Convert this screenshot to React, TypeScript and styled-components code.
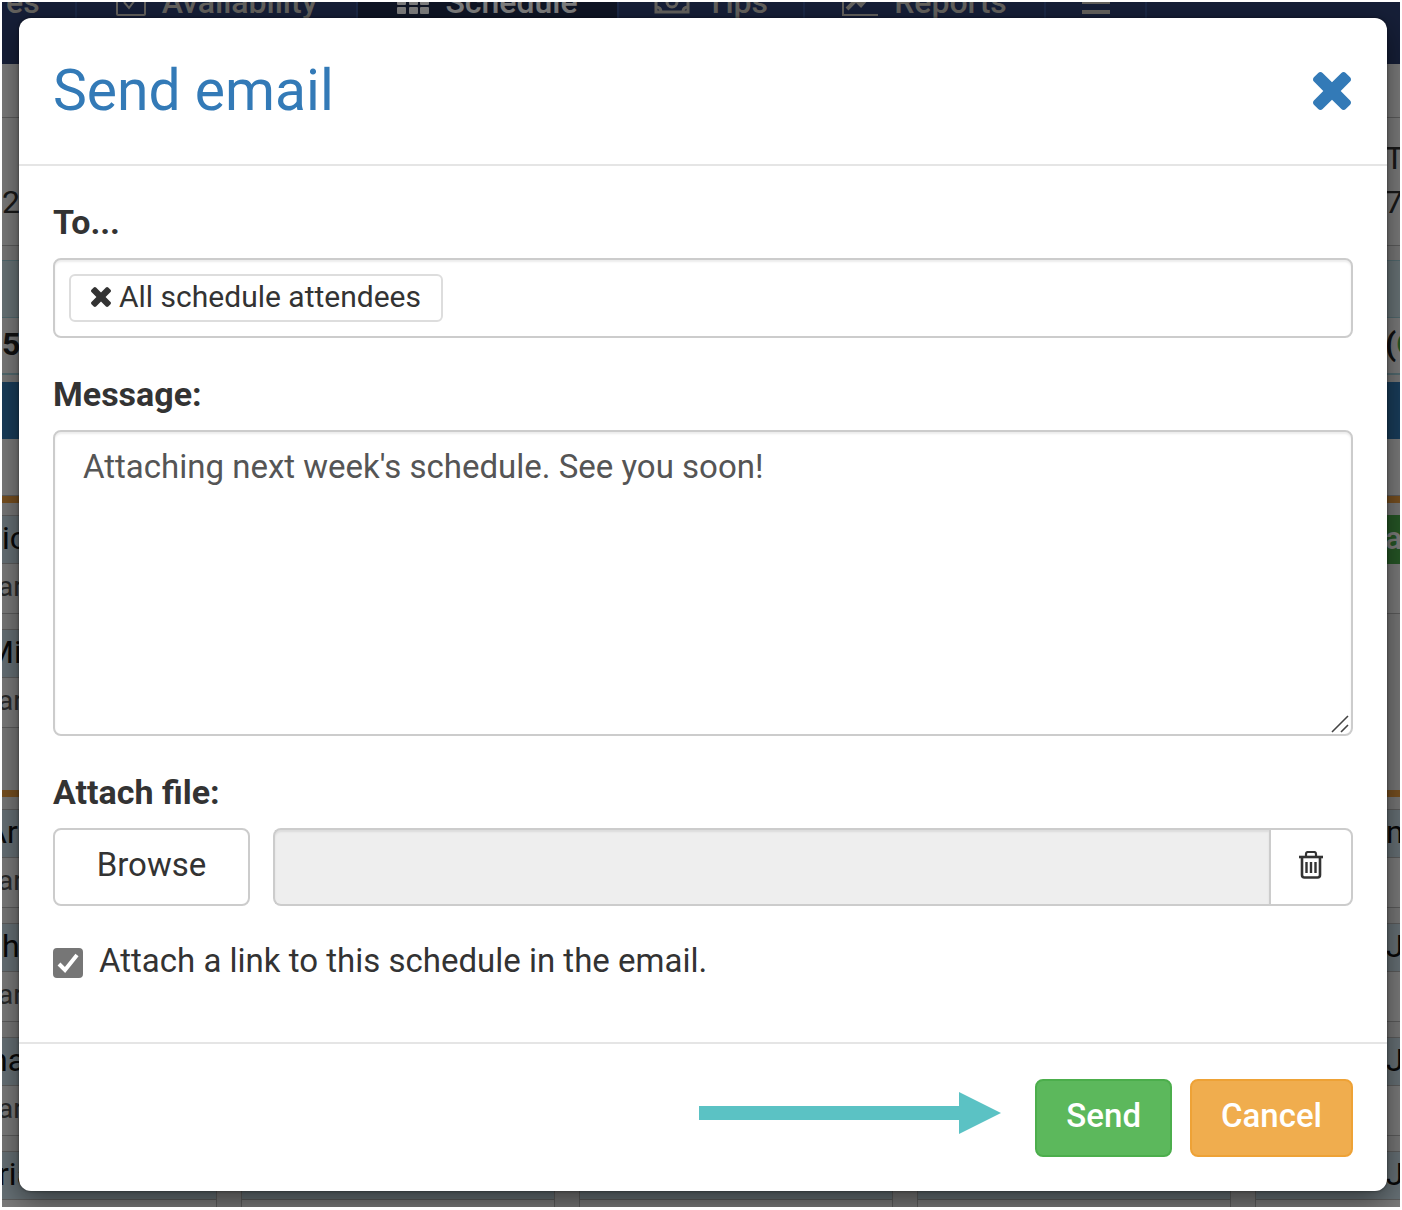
import React, { useState } from "react";
import styled, { createGlobalStyle, css } from "styled-components";

const GlobalStyle = createGlobalStyle`
  *, *::before, *::after { box-sizing: border-box; }
  body {
    margin: 0;
    background: #fff;
    color: #333;
    font-family: Roboto, "Liberation Sans", sans-serif;
    font-size: 33px;
    line-height: 44px;
  }
  button, input, textarea { font: inherit; color: inherit; margin: 0; }
`;

/* ---------- Schedule page behind the dialog ---------- */

const Frame = styled.div`
  position: relative;
  height: calc(100vh - 5px);
  margin: 2px 2px 3px;
  overflow: hidden;
  background: #fff;
`;

const Page = styled.div`
  margin-top: -60px;
`;

const NavBar = styled.nav`
  display: flex;
  height: 122px;
  background: #2c3e70;
`;

const NavItem = styled.a<{ $active?: boolean; $grow: number }>`
  display: flex;
  flex: 0 1 ${(p) => p.$grow}px;
  align-items: center;
  justify-content: center;
  gap: 16px;
  padding-bottom: 2px;
  border-right: 2px solid #36508c;
  background: ${(p) => (p.$active ? "#1f2a4b" : "transparent")};
  color: ${(p) => (p.$active ? "#fff" : "#c9c5bd")};
  font-size: 32px;
  font-weight: 500;
  text-decoration: none;
  white-space: nowrap;

  &:first-child {
    justify-content: flex-start;
    padding-left: 4px;
  }
`;

const Board = styled.div`
  display: grid;
  grid-template-columns: 215fr 314fr 314fr 314fr 145fr;
  column-gap: 24px;
  background: #f0f0f0;
`;

type Kind = "plain" | "gap" | "info" | "count" | "blue" | "orange" | "name" | "role" | "green";

const kinds = {
  plain: css`border-bottom: 1px solid #bbb;`,
  gap: css`background: #f0f0f0;`,
  info: css`background: #d3e8ee; border: 1px solid #a5d5de;`,
  count: css`border-bottom: 2px solid #a5d5de; color: #222; font-weight: 700;`,
  blue: css`background: #337ab7;`,
  orange: css`background: #f0a040;`,
  name: css`background: #cfe2ec; border: 1px solid #bbb; color: #111;`,
  role: css`border: 1px solid #bbb; border-top: 0; color: #555; font-size: 28px;`,
  green: css`background: #4cae4c; color: #fff; font-weight: 500;`,
};

const Cell = styled.div<{ $kind: Kind; $height: number; $indent: number }>`
  display: flex;
  flex-direction: column;
  justify-content: center;
  height: ${(p) => p.$height}px;
  padding-bottom: ${(p) => (p.$height > 12 ? 4 : 0)}px;
  overflow: hidden;
  background: #f8f8f8;
  font-size: 32px;
  text-indent: ${(p) => p.$indent}px;
  white-space: nowrap;
  ${(p) => kinds[p.$kind]}
`;

const Column = styled.div`
  min-width: 0;
  &:first-child > ${Cell} { border-left: 0; }
  &:last-child > ${Cell} { border-right: 0; }
`;

const Positive = styled.span`
  color: #4cae4c;
`;

interface Row {
  kind: Kind;
  height: number;
  left?: React.ReactNode;
  indent?: number;
  right?: React.ReactNode;
  rightKind?: Kind;
}

const rows: Row[] = [
  { kind: "plain", height: 54 },
  {
    kind: "plain",
    height: 128,
    left: <><br />2/</>,
    indent: -4,
    right: <><span>Tu</span><span>7/</span></>,
  },
  { kind: "gap", height: 14 },
  { kind: "info", height: 58 },
  { kind: "count", height: 57, left: "5", right: <span>(<Positive>G</Positive></span> },
  { kind: "gap", height: 7 },
  { kind: "blue", height: 57 },
  { kind: "plain", height: 57 },
  { kind: "orange", height: 7 },
  { kind: "gap", height: 12 },
  { kind: "name", height: 49, left: "ic", right: "ar", rightKind: "green" },
  { kind: "role", height: 50, left: "ar", indent: -4 },
  { kind: "gap", height: 15 },
  { kind: "name", height: 49, left: "Mi", indent: -16, rightKind: "gap" },
  { kind: "role", height: 50, left: "ar", indent: -4, rightKind: "gap" },
  { kind: "gap", height: 62 },
  { kind: "orange", height: 7 },
  { kind: "gap", height: 12 },
  { kind: "name", height: 49, left: "Ar", indent: -16, right: "n" },
  { kind: "role", height: 50, left: "ar", indent: -4 },
  { kind: "gap", height: 15 },
  { kind: "name", height: 49, left: "h", right: "J" },
  { kind: "role", height: 50, left: "ar", indent: -4 },
  { kind: "gap", height: 15 },
  { kind: "name", height: 49, left: "na", indent: -12, right: "J" },
  { kind: "role", height: 50, left: "ar", indent: -4 },
  { kind: "gap", height: 15 },
  { kind: "name", height: 49, left: "ria", indent: -4, right: "J" },
  { kind: "role", height: 50 },
];

type Side = "left" | "middle" | "right";

const sides: Side[] = ["left", "middle", "middle", "middle", "right"];

function DayColumn({ side }: { side: Side }) {
  return (
    <Column>
      {rows.map((row, i) => (
        <Cell
          key={i}
          $kind={side === "right" && row.rightKind ? row.rightKind : row.kind}
          $height={row.height}
          $indent={side === "right" ? 130 : row.indent ?? 0}
        >
          {side === "left" && row.left}
          {side === "right" && row.right}
        </Cell>
      ))}
    </Column>
  );
}

const CheckSquareIcon = () => (
  <svg width="30" height="30" viewBox="0 0 30 30" fill="none" stroke="currentColor" strokeWidth="2">
    <rect x="1" y="1" width="28" height="27" rx="1" />
    <path d="M8 15l5 6 9-12" />
  </svg>
);

const GridIcon = () => (
  <svg width="32" height="26" viewBox="0 0 32 26" fill="currentColor">
    {[0, 9, 18].map((y) =>
      [0, 12, 23].map((x) => <rect key={`${x}-${y}`} x={x} y={y} width="9" height="7" rx="1" />),
    )}
  </svg>
);

const CashIcon = () => (
  <svg width="36" height="24" viewBox="0 0 36 24" fill="none" stroke="currentColor" strokeWidth="3">
    <path d="M2 2h32v20H2z" />
    <circle cx="18" cy="12" r="5" />
    <path d="M2 17q5 0 5 5M34 17q-5 0-5 5" />
  </svg>
);

const ChartIcon = () => (
  <svg width="36" height="28" viewBox="0 0 36 28" fill="none" stroke="currentColor">
    <path d="M1 0v27h35" strokeWidth="2" />
    <path d="M5 21l9-9 5 5 9-10" strokeWidth="4" />
  </svg>
);

const MenuIcon = () => (
  <svg width="28" height="24" viewBox="0 0 28 24" fill="currentColor">
    <path d="M0 0h28v4H0zM0 10h28v4H0zM0 20h28v4H0z" />
  </svg>
);

/* ---------- Dialog ---------- */

const Backdrop = styled.div`
  position: absolute;
  inset: 0;
  padding: 16px 13px 16px 17px;
  background: rgba(0, 0, 0, 0.5);
`;

const Dialog = styled.section`
  border-radius: 12px;
  background: #fff;
  box-shadow: 0 10px 30px rgba(0, 0, 0, 0.5), 0 0 3px rgba(0, 0, 0, 0.5);
`;

const DialogHeader = styled.header`
  display: flex;
  align-items: center;
  justify-content: space-between;
  height: 148px;
  padding: 0 36px 0 34px;
  border-bottom: 2px solid #e5e5e5;
`;

const Title = styled.h1`
  margin: 0;
  color: #337ab7;
  font-size: 57px;
  font-weight: 400;
  line-height: 64px;
`;

const CloseButton = styled.button`
  display: flex;
  padding: 0;
  border: 0;
  background: none;
  color: #337ab7;
`;

const DialogBody = styled.div`
  display: flex;
  flex-direction: column;
  gap: 34px;
  padding: 34px 34px 58px;
`;

const Field = styled.div`
  display: flex;
  flex-direction: column;
  gap: 14px;
`;

const Label = styled.label`
  color: #333;
  font-size: 34px;
  font-weight: 700;
`;

const box = css`
  border: 2px solid #ccc;
  border-radius: 8px;
  background: #fff;
`;

const Recipients = styled.div`
  ${box}
  display: flex;
  align-items: center;
  height: 80px;
  padding: 0 14px;
  box-shadow: inset 0 2px 2px rgba(0, 0, 0, 0.075);
`;

const Tag = styled.span`
  display: flex;
  flex: none;
  align-items: center;
  gap: 8px;
  height: 48px;
  padding: 0 20px 2px;
  border: 2px solid #ddd;
  border-radius: 6px;
  font-size: 30px;
`;

const TagRemove = styled.button`
  display: flex;
  padding: 0;
  border: 0;
  background: none;
`;

const RecipientInput = styled.input`
  flex: 1;
  min-width: 0;
  border: 0;
  outline: 0;
  background: none;
`;

const MessageWrap = styled.div`
  position: relative;
  display: flex;
`;

const Message = styled.textarea`
  ${box}
  flex: 1;
  height: 306px;
  padding: 13px 28px;
  outline: 0;
  color: #555;
  resize: none;
  box-shadow: inset 0 2px 2px rgba(0, 0, 0, 0.075);
`;

const Grip = styled.svg`
  position: absolute;
  right: 4px;
  bottom: 3px;
`;

const FileRow = styled.div`
  display: flex;
  height: 78px;
`;

const BrowseButton = styled.button`
  ${box}
  width: 197px;
  margin-right: 23px;
  padding: 0 0 4px;
`;

const FileName = styled.input`
  ${box}
  flex: 1;
  min-width: 0;
  border-right: 0;
  border-radius: 8px 0 0 8px;
  background: #eee;
  box-shadow: inset 0 2px 2px rgba(0, 0, 0, 0.075);
`;

const ClearButton = styled.button`
  ${box}
  display: flex;
  align-items: center;
  justify-content: center;
  width: 84px;
  padding: 0 0 4px;
  border-radius: 0 8px 8px 0;
`;

const CheckRow = styled.label`
  display: flex;
  align-items: center;
  gap: 16px;
  padding-bottom: 2px;
  line-height: 42px;
`;

const CheckBox = styled.span`
  display: grid;
  margin-top: 4px;
  > * { grid-area: 1 / 1; }
  > svg { pointer-events: none; }
`;

const CheckInput = styled.input`
  appearance: none;
  width: 30px;
  height: 30px;
  border: 2px solid #767676;
  border-radius: 4px;
  background: #fff;
  &:checked { background: #767676; }
`;

const DialogFooter = styled.footer`
  display: flex;
  align-items: center;
  justify-content: flex-end;
  gap: 18px;
  height: 149px;
  padding: 0 34px;
  border-top: 2px solid #e5e5e5;
`;

const Arrow = styled.svg`
  margin: 0 16px 10px 0;
`;

const tones = {
  success: css`border-color: #4cae4c; background: #5cb85c;`,
  warning: css`border-color: #eea236; background: #f0ad4e;`,
};

const ActionButton = styled.button<{ $tone: keyof typeof tones }>`
  height: 78px;
  padding: 0 29px 4px;
  border: 2px solid;
  border-radius: 8px;
  ${(p) => tones[p.$tone]}
  color: #fff;
  font-weight: 500;
`;

const CrossIcon = ({ size }: { size: number }) => (
  <svg width={size} height={size} viewBox="110 366 1188 1188" fill="currentColor" aria-hidden="true">
    <path d="M1298 1322q0 40-28 68l-136 136q-28 28-68 28t-68-28l-294-294-294 294q-28 28-68 28t-68-28l-136-136q-28-28-28-68t28-68l294-294-294-294q-28-28-28-68t28-68l136-136q28-28 68-28t68 28l294 294 294-294q28-28 68-28t68 28l136 136q28 28 28 68t-28 68l-294 294 294 294q28 28 28 68z" />
  </svg>
);

const TrashIcon = () => (
  <svg width="26" height="28" viewBox="0 0 26 28" fill="none" stroke="#333" aria-hidden="true">
    <path d="M1 6h24" strokeWidth="2.6" />
    <path d="M8 5V3q0-2 2-2h6q2 0 2 2v2" strokeWidth="2.2" />
    <path d="M4 6v18q0 2.5 2.5 2.5h13q2.5 0 2.5-2.5V6" strokeWidth="2.6" />
    <path d="M8.5 11v11M13 11v11M17.5 11v11" strokeWidth="2.4" />
  </svg>
);

export default function App() {
  const [message, setMessage] = useState("Attaching next week's schedule. See you soon!");
  const [attachLink, setAttachLink] = useState(true);

  return (
    <>
      <GlobalStyle />
      <Frame>
        <Page>
          <NavBar>
            <NavItem href="#" $grow={75}>es</NavItem>
            <NavItem href="#" $grow={281}><CheckSquareIcon />Availability</NavItem>
            <NavItem href="#" $grow={261} $active><GridIcon />Schedule</NavItem>
            <NavItem href="#" $grow={186}><CashIcon />Tips</NavItem>
            <NavItem href="#" $grow={241}><ChartIcon />Reports</NavItem>
            <NavItem href="#" $grow={101} aria-label="Menu"><MenuIcon /></NavItem>
          </NavBar>
          <Board>
            {sides.map((side, i) => <DayColumn key={i} side={side} />)}
          </Board>
        </Page>

        <Backdrop>
          <Dialog role="dialog" aria-labelledby="dialog-title">
            <DialogHeader>
              <Title id="dialog-title">Send email</Title>
              <CloseButton type="button" aria-label="Close"><CrossIcon size={38} /></CloseButton>
            </DialogHeader>

            <DialogBody>
              <Field>
                <Label htmlFor="to">To...</Label>
                <Recipients>
                  <Tag>
                    <TagRemove type="button" aria-label="Remove"><CrossIcon size={20} /></TagRemove>
                    All schedule attendees
                  </Tag>
                  <RecipientInput id="to" type="text" />
                </Recipients>
              </Field>

              <Field>
                <Label htmlFor="message">Message:</Label>
                <MessageWrap>
                  <Message id="message" value={message} onChange={(e) => setMessage(e.target.value)} />
                  <Grip width="18" height="18" viewBox="0 0 18 18" stroke="#444" strokeWidth="1.6" aria-hidden="true">
                    <path d="M1 17L17 1M10 17l7-7" />
                  </Grip>
                </MessageWrap>
              </Field>

              <Field>
                <Label htmlFor="file">Attach file:</Label>
                <FileRow>
                  <BrowseButton type="button">Browse</BrowseButton>
                  <FileName id="file" type="text" readOnly />
                  <ClearButton type="button" aria-label="Remove file"><TrashIcon /></ClearButton>
                </FileRow>
              </Field>

              <CheckRow>
                <CheckBox>
                  <CheckInput
                    type="checkbox"
                    checked={attachLink}
                    onChange={(e) => setAttachLink(e.target.checked)}
                  />
                  <svg width="30" height="30" viewBox="0 0 30 30" fill="none" stroke="#fff" strokeWidth="4">
                    <path d="M6 16l6 6L24 7" />
                  </svg>
                </CheckBox>
                Attach a link to this schedule in the email.
              </CheckRow>
            </DialogBody>

            <DialogFooter>
              <Arrow width="302" height="42" viewBox="0 0 302 42" fill="#5bc2c4" aria-hidden="true">
                <path d="M0 14h260V0l42 21-42 21V28H0z" />
              </Arrow>
              <ActionButton type="button" $tone="success">Send</ActionButton>
              <ActionButton type="button" $tone="warning">Cancel</ActionButton>
            </DialogFooter>
          </Dialog>
        </Backdrop>
      </Frame>
    </>
  );
}
